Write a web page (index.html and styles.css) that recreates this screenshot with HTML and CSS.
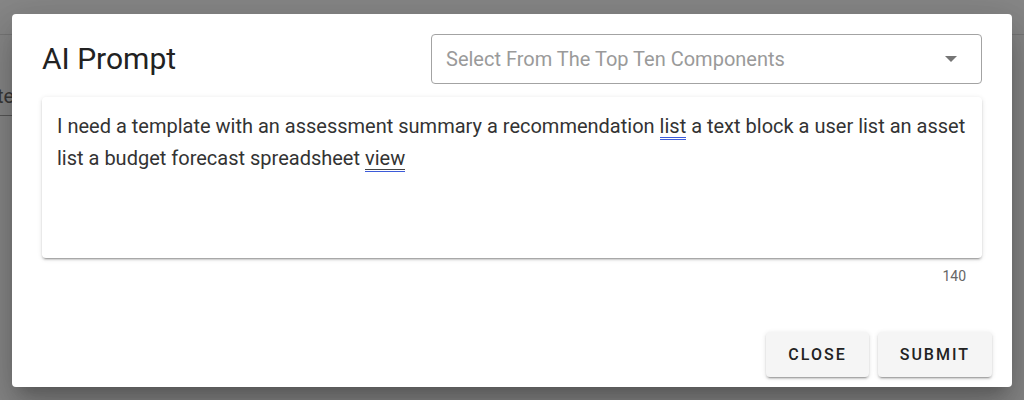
FILE: index.html
```html
<!DOCTYPE html>
<html>
<head>
<meta charset="utf-8">
<link rel="stylesheet" href="styles.css">
</head>
<body>
<div class="page">
  <div class="appbar"></div>
  <div class="bgfield"><span class="bgtext">te</span></div>
</div>
<div class="overlay"></div>
<div class="dialog">
  <div class="dialog-head">
    <h1 class="title">AI Prompt</h1>
    <div class="select">
      <span class="placeholder">Select From The Top Ten Components</span>
      <svg class="caret" width="14" height="8" viewBox="0 0 14 8"><path d="M1 1 L13 1 L7 7 Z" fill="#757575"/></svg>
    </div>
  </div>
  <div class="card">
    <p class="prompt">I need a template with an assessment summary a recommendation <span class="sp sp-blue">list</span> a text block a user list an asset list a budget forecast spreadsheet <span class="sp sp-mix">view</span></p>
  </div>
  <div class="counter">140</div>
  <div class="actions">
    <button class="btn">Close</button>
    <button class="btn">Submit</button>
  </div>
</div>
</body>
</html>
```

FILE: styles.css
```css
html, body {
  margin: 0;
  padding: 0;
}
body {
  width: 1024px;
  height: 400px;
  overflow: hidden;
  position: relative;
  font-family: Roboto, "Liberation Sans", sans-serif;
  background: #ffffff;
}
.page {
  height: 400px;
}
.appbar {
  height: 34px;
  border-bottom: 1px solid #ddd;
}
.bgfield {
  margin-top: 46px;
  width: 60px;
  height: 34px;
  border-bottom: 1px solid #999;
  overflow: hidden;
}
.bgtext {
  display: inline-block;
  font-size: 20px;
  color: #555;
  margin-left: -3px;
  line-height: 30px;
}
.overlay {
  position: absolute;
  inset: 0;
  background: rgba(33, 33, 33, 0.54);
}
.dialog {
  position: absolute;
  left: 12px;
  top: 14px;
  width: 1000px;
  height: 373px;
  background: #fff;
  border-radius: 4px;
  box-shadow: 0 11px 15px -7px rgba(0,0,0,.2), 0 24px 38px 3px rgba(0,0,0,.14), 0 9px 46px 8px rgba(0,0,0,.12);
  display: flex;
  flex-direction: column;
  box-sizing: border-box;
}
.dialog-head {
  display: flex;
  align-items: center;
  justify-content: space-between;
  padding: 20px 30px 0 30px;
}
.title {
  margin: 0;
  font-size: 30px;
  font-weight: 400;
  color: #222;
  letter-spacing: 0;
  line-height: 36px;
}
.select {
  width: 551px;
  height: 50px;
  box-sizing: border-box;
  border: 1px solid #a3a3a3;
  border-radius: 4px;
  display: flex;
  align-items: center;
  justify-content: space-between;
  padding: 0 23px 0 14px;
}
.placeholder {
  font-size: 20px;
  color: #9a9a9a;
}
.caret {
  display: block;
}
.card {
  margin: 13px 30px 0 30px;
  height: 161px;
  box-sizing: border-box;
  border-radius: 4px;
  box-shadow: 0 3px 1px -2px rgba(0,0,0,.2), 0 2px 2px 0 rgba(0,0,0,.14), 0 1px 5px 0 rgba(0,0,0,.12);
  padding: 13px 15px 0 15px;
}
.prompt {
  margin: 0;
  font-size: 20px;
  line-height: 32px;
  color: #333;
}
.sp {
  padding-bottom: 3px;
  background-repeat: no-repeat;
  background-size: 100% 1px, 100% 1px;
}
.sp-blue {
  background-image: linear-gradient(#3d5bd9, #3d5bd9), linear-gradient(#3d5bd9, #3d5bd9);
  background-position: 0 calc(100% - 3px), 0 calc(100% - 1px);
}
.sp-mix {
  background-image: linear-gradient(#444, #444), linear-gradient(#3d5bd9, #3d5bd9);
  background-position: 0 calc(100% - 3px), 0 calc(100% - 1px);
}
.counter {
  margin: 6px 46px 0 0;
  text-align: right;
  font-size: 14px;
  line-height: 24px;
  color: #666;
}
.actions {
  margin-top: auto;
  display: flex;
  justify-content: flex-end;
  gap: 9px;
  padding: 0 20px 10px 0;
}
.btn {
  font-family: Roboto, "Liberation Sans", sans-serif;
  height: 45px;
  padding: 0 22px;
  border: none;
  border-radius: 4px;
  background: #f5f5f5;
  box-shadow: 0 3px 1px -2px rgba(0,0,0,.2), 0 2px 2px 0 rgba(0,0,0,.14), 0 1px 5px 0 rgba(0,0,0,.12);
  font-size: 16px;
  font-weight: 500;
  letter-spacing: 2px;
  text-transform: uppercase;
  color: #222;
}
```
